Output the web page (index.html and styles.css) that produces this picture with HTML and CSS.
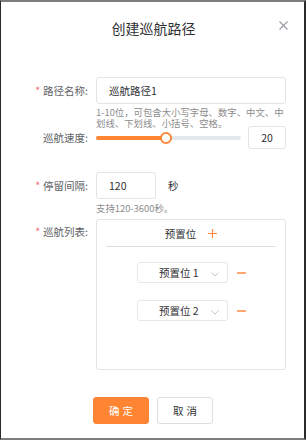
FILE: index.html
```html
<!DOCTYPE html>
<html lang="zh">
<head>
<meta charset="utf-8">
<link rel="stylesheet" href="styles.css">
</head>
<body>
<div class="dialog">
  <div class="header">
    <div class="title">创建巡航路径</div>
    <svg class="close" width="9" height="9" viewBox="0 0 9 9"><path d="M0.5 0.5L8.5 8.5M8.5 0.5L0.5 8.5" stroke="#9a9ca3" stroke-width="1.1" fill="none"/></svg>
  </div>
  <div class="form">
    <div class="row r1">
      <label class="label"><span class="star">*</span>路径名称:</label>
      <div class="content">
        <div class="input wide">巡航路径1</div>
        <div class="help h2l">1-10位，可包含大小写字母、数字、中文、中划线、下划线、小括号、空格。</div>
      </div>
    </div>
    <div class="row r2">
      <label class="label">巡航速度:</label>
      <div class="content slider-row">
        <div class="slider">
          <div class="track"><div class="fill" style="width:48%"></div></div>
          <div class="thumb" style="left:48%"></div>
        </div>
        <div class="input num">20</div>
      </div>
    </div>
    <div class="row r3">
      <label class="label"><span class="star">*</span>停留间隔:</label>
      <div class="content">
        <div class="inline">
          <div class="input short">120</div>
          <span class="unit">秒</span>
        </div>
        <div class="help">支持120-3600秒。</div>
      </div>
    </div>
    <div class="row r4">
      <label class="label top"><span class="star">*</span>巡航列表:</label>
      <div class="content">
        <div class="listbox">
          <div class="list-head">
            <span>预置位</span>
            <svg class="plus" width="9" height="9" viewBox="0 0 9 9"><path d="M4.5 0V9M0 4.5H9" stroke="#ff8533" stroke-width="1.1" fill="none"/></svg>
          </div>
          <div class="divider"></div>
          <div class="preset">
            <div class="select">预置位 1
              <svg class="chev" width="8" height="5" viewBox="0 0 8 5"><path d="M0.5 0.5L4 4L7.5 0.5" stroke="#c0c4cc" stroke-width="1" fill="none"/></svg>
            </div>
            <svg class="minus" width="9" height="2" viewBox="0 0 9 2"><path d="M0 1H9" stroke="#ff8533" stroke-width="1.4"/></svg>
          </div>
          <div class="preset">
            <div class="select">预置位 2
              <svg class="chev" width="8" height="5" viewBox="0 0 8 5"><path d="M0.5 0.5L4 4L7.5 0.5" stroke="#c0c4cc" stroke-width="1" fill="none"/></svg>
            </div>
            <svg class="minus" width="9" height="2" viewBox="0 0 9 2"><path d="M0 1H9" stroke="#ff8533" stroke-width="1.4"/></svg>
          </div>
        </div>
      </div>
    </div>
  </div>
  <div class="footer">
    <button class="btn primary">确定</button>
    <button class="btn">取消</button>
  </div>
</div>
</body>
</html>
```
FILE: styles.css
```css
* { box-sizing: border-box; }
html, body { margin: 0; padding: 0; }
body {
  width: 306px;
  height: 440px;
  background: #1e1e1e;
  font-family: "Noto Sans CJK SC", "Noto Sans", sans-serif;
  overflow: hidden;
}
.dialog {
  position: relative;
  width: 306px;
  height: 440px;
  background: #fff;
  border-top: 2px solid #7d7d7d;
  border-left: 1px solid #2a2a2a;
  border-right: 2px solid #2a2a2a;
  border-bottom: 2px solid #7d7d7d;
  display: flex;
  flex-direction: column;
}
.header {
  position: relative;
  padding-top: 16px;
  height: 36px;
}
.title {
  text-align: center;
  font-size: 14px;
  line-height: 20px;
  color: #303133;
  padding-left: 2px;
}
.close {
  position: absolute;
  right: 16px;
  top: 19px;
}
.form {
  padding-top: 39px;
  display: flex;
  flex-direction: column;
}
.row {
  display: flex;
  align-items: center;
}
.r1 { margin-bottom: 22px; }
.r2 { margin-bottom: 23px; }
.r3 { margin-bottom: 20px; }
.r4 { align-items: flex-start; }
.label {
  width: 87px;
  flex: none;
  text-align: right;
  font-size: 10.5px;
  color: #606266;
  margin-right: 8px;
  line-height: 14px;
}
.label.top { line-height: 26px; }
.star {
  color: #f56c6c;
  margin-right: 3px;
}
.content {
  position: relative;
  width: 190px;
}
.input {
  height: 27px;
  border: 1px solid #e2e4ea;
  border-radius: 3px;
  font-size: 10.5px;
  color: #303133;
  line-height: 25px;
  padding-left: 12px;
}
.wide { width: 190px; }
.short { width: 60px; }
.num {
  width: 38px;
  height: 23px;
  line-height: 21px;
  padding: 0;
  text-align: center;
  flex: none;
}
.help {
  position: absolute;
  top: 100%;
  left: 0;
  margin-top: 4px;
  font-size: 9.4px;
  line-height: 11px;
  color: #8c8c8c;
  white-space: nowrap;
}
.help.h2l {
  white-space: normal;
  width: 190px;
  margin-top: 3px;
}
.slider-row {
  display: flex;
  align-items: center;
  gap: 7px;
}
.slider {
  position: relative;
  width: 145px;
  height: 12px;
  display: flex;
  align-items: center;
}
.track {
  width: 100%;
  height: 4px;
  border-radius: 2px;
  background: #e4e7ed;
  overflow: hidden;
}
.fill {
  height: 100%;
  background: #ff8533;
}
.thumb {
  position: absolute;
  top: 0;
  width: 12px;
  height: 12px;
  margin-left: -6px;
  border-radius: 50%;
  border: 2px solid #ff8533;
  background: #fff;
}
.inline {
  display: flex;
  align-items: center;
}
.unit {
  margin-left: 12px;
  font-size: 10.5px;
  color: #303133;
}
.listbox {
  width: 190px;
  height: 151px;
  border: 1px solid #e2e4ea;
  border-radius: 3px;
  padding: 0 9px;
}
.list-head {
  height: 26px;
  display: flex;
  align-items: center;
  justify-content: center;
  gap: 12px;
  font-size: 10.5px;
  color: #303133;
}
.divider {
  height: 1px;
  background: #dcdfe6;
  margin-bottom: 15px;
}
.preset {
  display: flex;
  align-items: center;
  justify-content: center;
  gap: 9px;
  margin-bottom: 17px;
  padding-left: 1px;
}
.select {
  position: relative;
  width: 91px;
  height: 21px;
  border: 1px solid #e6e8ee;
  border-radius: 3px;
  font-size: 10.5px;
  line-height: 19px;
  color: #303133;
  padding-left: 21px;
}
.chev {
  position: absolute;
  right: 8px;
  top: 9px;
}
.footer {
  margin-top: 27px;
  display: flex;
  justify-content: center;
  gap: 8px;
  padding-left: 1px;
}
.btn {
  width: 56px;
  height: 27px;
  border: 1px solid #dcdfe6;
  border-radius: 3px;
  background: #fff;
  font-family: "Noto Sans CJK SC", sans-serif;
  font-size: 10.5px;
  color: #303133;
  letter-spacing: 3px;
  padding: 0 0 0 3px;
}
.btn.primary {
  background: #ff8533;
  border-color: #ff8533;
  color: #fff;
}
```
